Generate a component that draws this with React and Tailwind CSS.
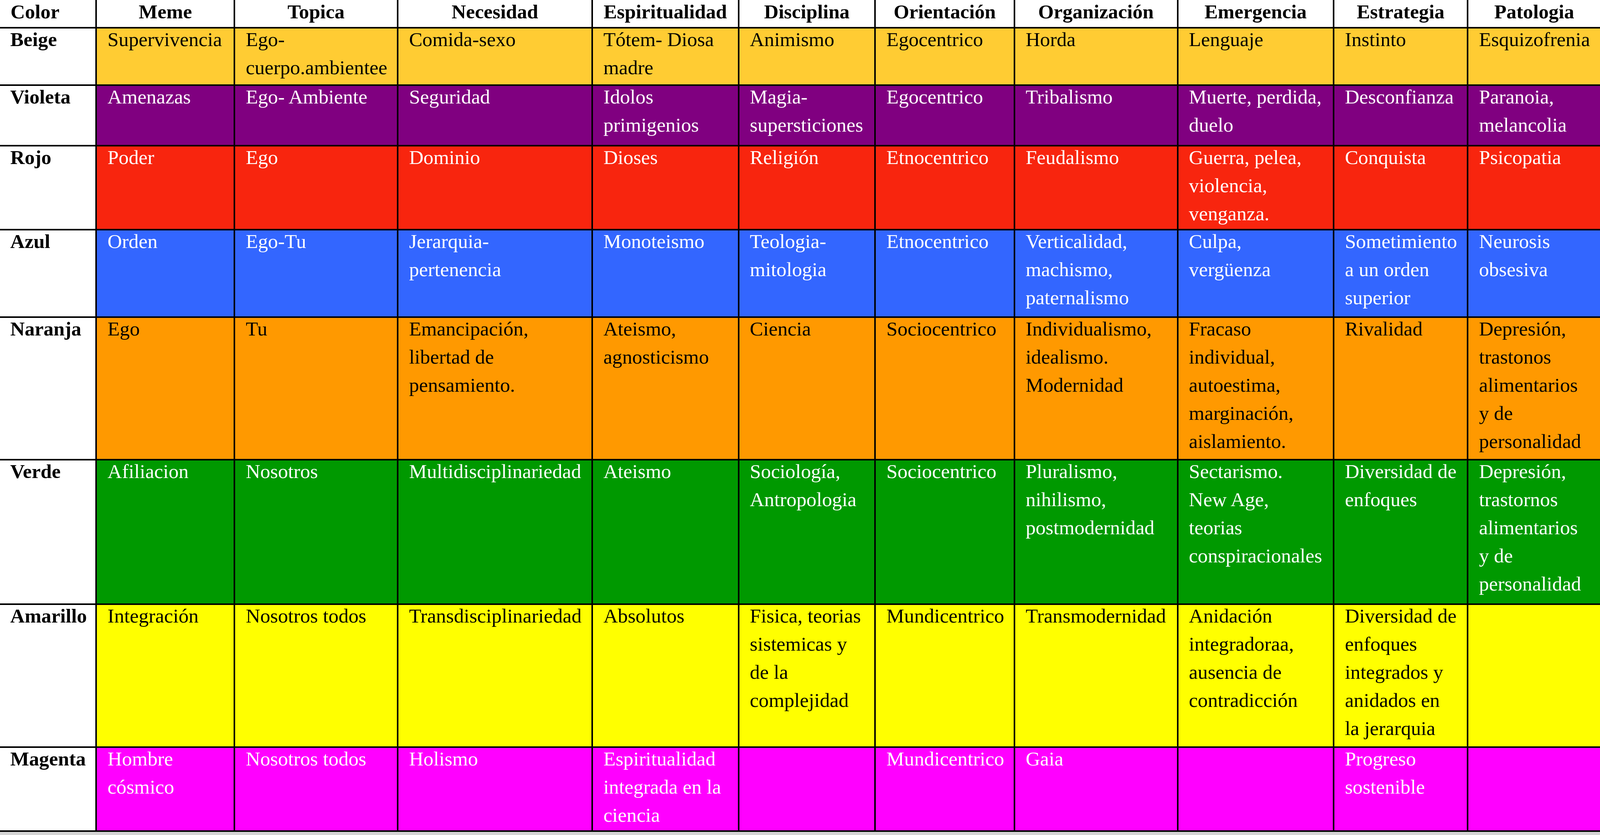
import React from 'react';

const headers = [
    'Color', 'Meme', 'Topica', 'Necesidad', 'Espiritualidad', 'Disciplina',
    'Orientación', 'Organización', 'Emergencia', 'Estrategia', 'Patologia'
];

// bg / text colour per level
const rows = [
    {
        name: 'Beige', bg: 'bg-[#ffcc33]', text: 'text-black',
        cells: ['Supervivencia', 'Ego-\ncuerpo.ambientee', 'Comida-sexo', 'Tótem- Diosa\nmadre', 'Animismo', 'Egocentrico', 'Horda', 'Lenguaje', 'Instinto', 'Esquizofrenia']
    },
    {
        name: 'Violeta', bg: 'bg-[#800080]', text: 'text-white',
        cells: ['Amenazas', 'Ego- Ambiente', 'Seguridad', 'Idolos\nprimigenios', 'Magia-\nsupersticiones', 'Egocentrico', 'Tribalismo', 'Muerte, perdida,\nduelo', 'Desconfianza', 'Paranoia,\nmelancolia']
    },
    {
        name: 'Rojo', bg: 'bg-[#f8250e]', text: 'text-white',
        cells: ['Poder', 'Ego', 'Dominio', 'Dioses', 'Religión', 'Etnocentrico', 'Feudalismo', 'Guerra, pelea,\nviolencia,\nvenganza.', 'Conquista', 'Psicopatia']
    },
    {
        name: 'Azul', bg: 'bg-[#3366ff]', text: 'text-white',
        cells: ['Orden', 'Ego-Tu', 'Jerarquia-\npertenencia', 'Monoteismo', 'Teologia-\nmitologia', 'Etnocentrico', 'Verticalidad,\nmachismo,\npaternalismo', 'Culpa,\nvergüenza', 'Sometimiento\na un orden\nsuperior', 'Neurosis\nobsesiva']
    },
    {
        name: 'Naranja', bg: 'bg-[#ff9900]', text: 'text-black',
        cells: ['Ego', 'Tu', 'Emancipación,\nlibertad de\npensamiento.', 'Ateismo,\nagnosticismo', 'Ciencia', 'Sociocentrico', 'Individualismo,\nidealismo.\nModernidad', 'Fracaso\nindividual,\nautoestima,\nmarginación,\naislamiento.', 'Rivalidad', 'Depresión,\ntrastonos\nalimentarios\ny de\npersonalidad']
    },
    {
        name: 'Verde', bg: 'bg-[#009900]', text: 'text-white',
        cells: ['Afiliacion', 'Nosotros', 'Multidisciplinariedad', 'Ateismo', 'Sociología,\nAntropologia', 'Sociocentrico', 'Pluralismo,\nnihilismo,\npostmodernidad', 'Sectarismo.\nNew Age,\nteorias\nconspiracionales', 'Diversidad de\nenfoques', 'Depresión,\ntrastornos\nalimentarios\ny de\npersonalidad']
    },
    {
        name: 'Amarillo', bg: 'bg-[#ffff00]', text: 'text-black',
        cells: ['Integración', 'Nosotros todos', 'Transdisciplinariedad', 'Absolutos', 'Fisica, teorias\nsistemicas y\nde la\ncomplejidad', 'Mundicentrico', 'Transmodernidad', 'Anidación\nintegradoraa,\nausencia de\ncontradicción', 'Diversidad de\nenfoques\nintegrados y\nanidados en\nla jerarquia', '']
    },
    {
        name: 'Magenta', bg: 'bg-[#ff00ff]', text: 'text-white',
        cells: ['Hombre\ncósmico', 'Nosotros todos', 'Holismo', 'Espiritualidad\nintegrada en la\nciencia', '', 'Mundicentrico', 'Gaia', '', 'Progreso\nsostenible', '']
    }
];

export default function App() {
    return (
        <div className="w-full h-screen overflow-hidden bg-[#d4d4d4] font-['Liberation_Serif',serif] text-[1.25vw] leading-[72px]">
            <div className="bg-black pb-[4px]">
                <div className="grid gap-[4px] grid-cols-[301fr_431fr_510fr_608fr_457fr_426fr_434fr_510fr_487fr_418fr_415fr] grid-rows-[69px_143px_151px_211px_220px_361px_366px_362px_211px]">
                    {headers.map((h, i) => (
                        <div key={h} className={`bg-white text-black font-bold whitespace-nowrap min-w-0 ${i === 0 ? 'pl-[0.66vw] text-left' : 'text-center'}`}>
                            <div className="-mt-[6px]">{h}</div>
                        </div>
                    ))}

                    {rows.map((row) => (
                        <React.Fragment key={row.name}>
                            <div className="bg-white text-black font-bold pl-[0.64vw] min-w-0">
                                <div className="-mt-[8px]">{row.name}</div>
                            </div>
                            {row.cells.map((c, j) => (
                                <div key={j} className={`${row.bg} ${row.text} pl-[0.66vw] whitespace-pre min-w-0`}>
                                    <div className="-mt-[8px]">{c}</div>
                                </div>
                            ))}
                        </React.Fragment>
                    ))}
                </div>
            </div>
        </div>
    );
}
